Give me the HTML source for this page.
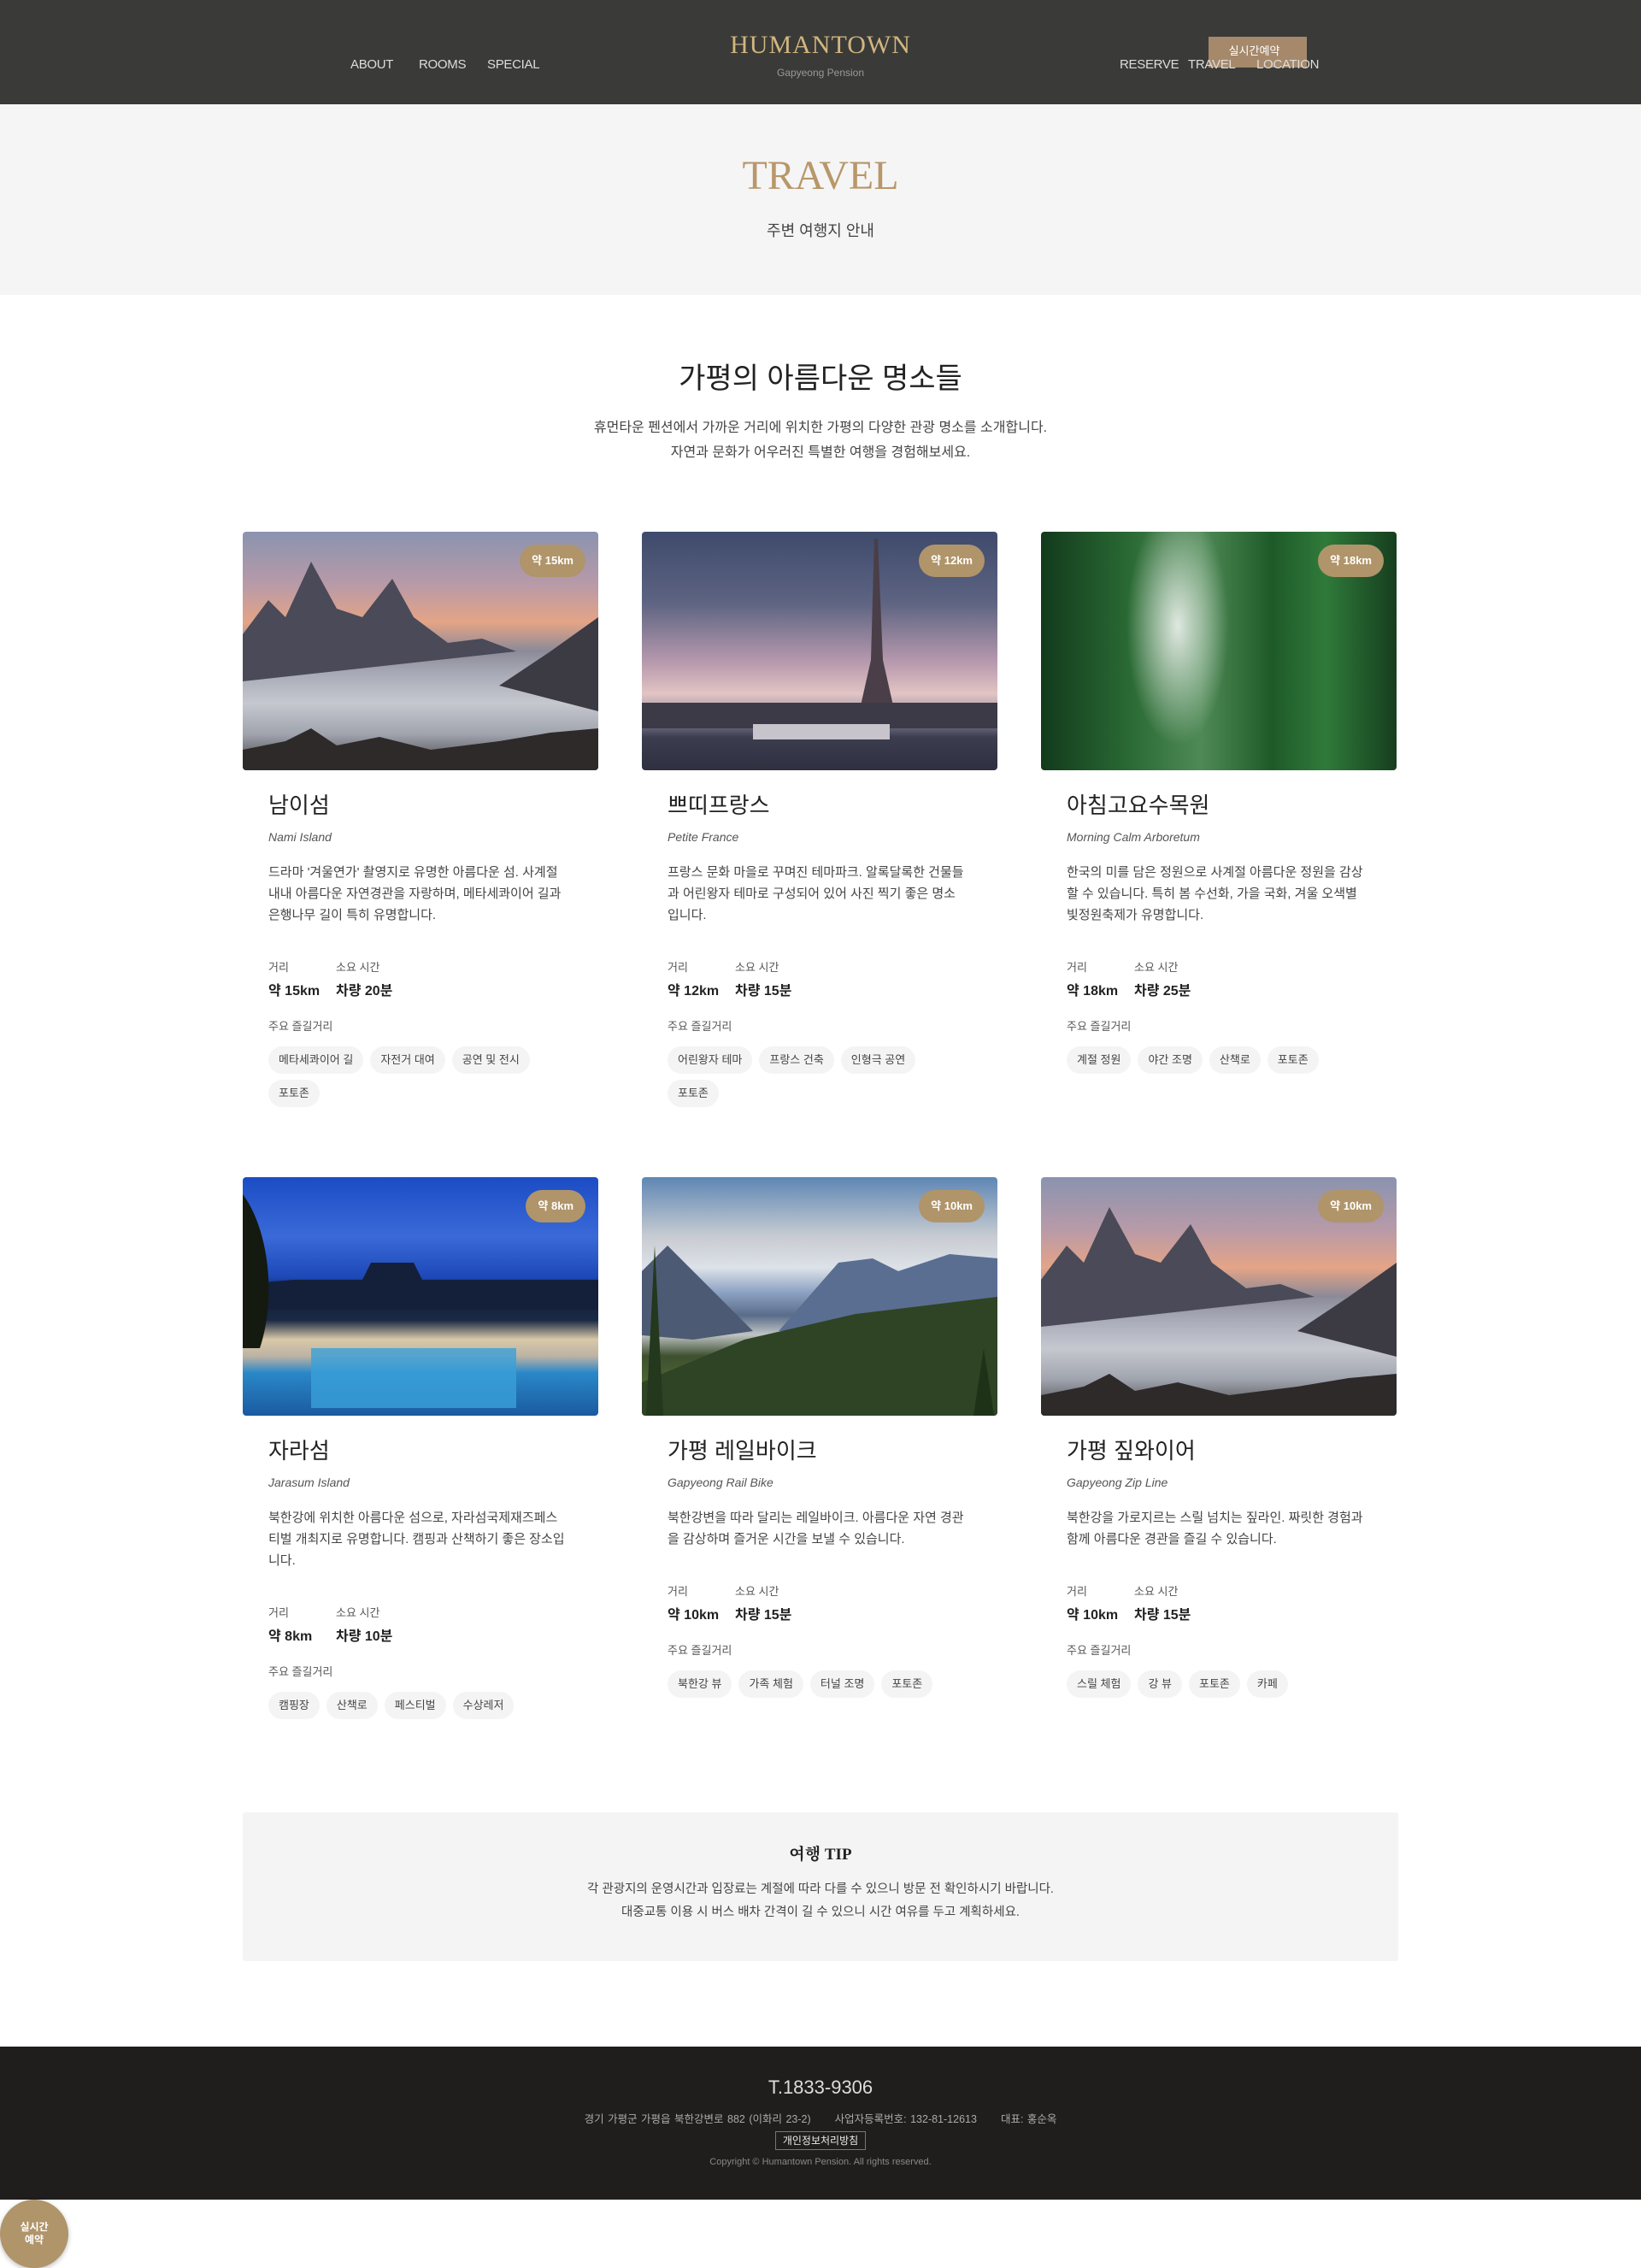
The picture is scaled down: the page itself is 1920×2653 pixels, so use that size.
<!DOCTYPE html>
<html lang="ko"><head><meta charset="utf-8"><title>Travel - Humantown</title>
<style>
*{margin:0;padding:0;box-sizing:border-box}
body{width:1920px;height:2653px;position:relative;background:#fff;font-family:"Liberation Sans","Noto Sans CJK KR",sans-serif;color:#333;overflow:hidden}
.hdr{position:absolute;left:0;top:0;width:1920px;height:122px;background:#3a3b38}
.nav{position:absolute;top:66px;font-size:15px;color:#ddd;white-space:nowrap;line-height:20px;letter-spacing:-0.3px}
.logo{position:absolute;left:0;width:1920px;text-align:center;top:36px;font-family:"Liberation Serif","Noto Serif CJK SC",serif;font-size:30px;color:#d2b57f;letter-spacing:1px;line-height:34px}
.logosub{position:absolute;left:0;width:1920px;text-align:center;top:78px;font-size:12px;color:#999}
.rbtn{position:absolute;left:1414px;top:43px;width:115px;height:36px;background:#a5896a;color:#fff;font-size:13px;text-align:center;line-height:34px;padding-right:8px}
.hero{position:absolute;top:122px;left:0;width:1920px;height:223px;background:#f5f5f5;text-align:center}
.hero h1{position:absolute;width:100%;font-family:"Liberation Serif",serif;font-weight:normal;font-size:48px;color:#b8976a;line-height:56px;top:56px}
.hero p{position:absolute;width:100%;top:136px;font-size:18px;color:#444;line-height:24px}
.sec{position:absolute;top:420px;left:0;width:1920px;text-align:center}
.sec h2{font-weight:normal;font-size:34px;color:#222;line-height:46px}
.sec p{margin-top:20px;font-size:16px;color:#444;line-height:29px}
.grid{position:absolute;left:284px;top:622px;width:1350px;display:grid;grid-template-columns:416px 416px 416px;column-gap:51px;row-gap:82px}
.card{min-height:673px}
.img{position:relative;width:416px;height:279px;border-radius:4px;overflow:hidden}
.badge{position:absolute;right:15px;top:15px;height:38px;padding:0 14px;border-radius:19px;background:#b0946a;color:#fff;font-size:13px;font-weight:bold;line-height:38px}
.body{padding:0 30px}
.body h3{margin-top:23px;font-weight:normal;font-size:26px;color:#222;line-height:36px}
.en{margin-top:9px;font-style:italic;font-size:14px;color:#555;line-height:20px}
.desc{margin-top:19px;font-size:15px;color:#444;line-height:25px;word-break:break-all;width:350px}
.stats{margin-top:40px;display:flex;gap:0}
.stats div{width:79px}
.lab{font-size:13px;color:#555;line-height:18px}
.val{margin-top:8px;font-size:16px;font-weight:bold;color:#222;line-height:22px;white-space:nowrap}
.act{margin-top:21px;font-size:13px;color:#555;line-height:18px}
.tags{margin-top:14px;display:flex;flex-wrap:wrap;gap:7px 8px}
.tags span{height:32px;line-height:32px;padding:0 12px;border-radius:16px;background:#f4f4f4;font-size:13px;color:#444}
.tip{position:absolute;left:284px;top:2120px;width:1352px;height:174px;background:#f4f4f4;border-radius:3px;text-align:center}
.tip h4{margin-top:37px;font-size:19px;color:#222;line-height:26px;font-family:"Liberation Serif","Noto Serif CJK SC",serif}
.tip p{margin-top:14px;font-size:14.5px;color:#444;line-height:27px}
.ftr{position:absolute;left:0;top:2394px;width:1920px;height:179px;background:#1f1e1d;text-align:center}
.ftr .ph{margin-top:35px;font-size:22px;color:#ddd;line-height:26px}
.ftr .ad{margin-top:15px;font-size:12.5px;color:#aaa;line-height:18px;word-spacing:1px}
.ftr .ad span{margin:0 14px}
.ftr .pb{display:inline-block;margin-top:5px;border:1px solid #777;padding:0 8px;height:22px;line-height:20px;font-size:12px;color:#eee}
.ftr .cp{margin-top:6px;font-size:11px;color:#888;line-height:16px}
.fab{position:absolute;left:0;top:2573px;width:80px;height:80px;border-radius:50%;background:#b0946a;color:#fff;font-size:12px;font-weight:bold;text-align:center;line-height:15px;padding-top:25px;box-shadow:0 2px 6px rgba(0,0,0,.25)}
</style></head><body>
<div class="hdr">
<div class="nav" style="left:410px">ABOUT</div>
<div class="nav" style="left:490px">ROOMS</div>
<div class="nav" style="left:570px">SPECIAL</div>
<div class="logo">HUMANTOWN</div>
<div class="logosub">Gapyeong Pension</div>
<div class="rbtn">실시간예약</div>
<div class="nav" style="left:1310px">RESERVE</div>
<div class="nav" style="left:1390px">TRAVEL</div>
<div class="nav" style="left:1470px">LOCATION</div>
</div>
<div class="hero"><h1>TRAVEL</h1><p>주변 여행지 안내</p></div>
<div class="sec"><h2>가평의 아름다운 명소들</h2><p>휴먼타운 펜션에서 가까운 거리에 위치한 가평의 다양한 관광 명소를 소개합니다.<br>자연과 문화가 어우러진 특별한 여행을 경험해보세요.</p></div>

<div class="grid">
<div class="card"><div class="img" style="background:linear-gradient(180deg,#8a93b0 0%,#b89aa8 22%,#e4a486 38%,#8c8a98 50%,#a9acb8 60%,#c6c8d0 72%,#9fa3ad 85%,#3e3a3a 100%)">
<svg width="416" height="279" style="position:absolute;left:0;top:0"><polygon points="0,120 30,80 50,100 80,35 110,90 140,100 175,55 200,100 240,130 280,125 320,140 0,175" fill="#4a4a58"/><polygon points="416,100 416,210 300,180 360,140" fill="#3c3a42"/><polygon points="0,279 0,255 50,245 80,230 110,250 160,240 220,255 300,245 360,235 416,230 416,279" fill="#2e2a2a"/></svg>
<div class="badge">약 15km</div></div>
<div class="body"><h3>남이섬</h3><div class="en">Nami Island</div><div class="desc">드라마 '겨울연가' 촬영지로 유명한 아름다운 섬. 사계절 내내 아름다운 자연경관을 자랑하며, 메타세콰이어 길과 은행나무 길이 특히 유명합니다.</div>
<div class="stats"><div><div class="lab">거리</div><div class="val">약 15km</div></div><div><div class="lab">소요 시간</div><div class="val">차량 20분</div></div></div>
<div class="act">주요 즐길거리</div><div class="tags"><span>메타세콰이어 길</span><span>자전거 대여</span><span>공연 및 전시</span><span>포토존</span></div></div></div>
<div class="card"><div class="img" style="background:linear-gradient(180deg,#3e4a6c 0%,#5e6482 30%,#b89aae 55%,#e2c4c4 68%,#8e8aa0 78%,#3c3e50 86%,#2e3040 100%)">
<svg width="416" height="279" style="position:absolute;left:0;top:0"><polygon points="272,8 276,8 282,150 300,230 250,230 268,150" fill="#4a3e48"/><rect x="0" y="200" width="416" height="30" fill="#3c3a46"/><rect x="130" y="225" width="160" height="18" fill="#c8c4cc"/></svg>
<div class="badge">약 12km</div></div>
<div class="body"><h3>쁘띠프랑스</h3><div class="en">Petite France</div><div class="desc">프랑스 문화 마을로 꾸며진 테마파크. 알록달록한 건물들과 어린왕자 테마로 구성되어 있어 사진 찍기 좋은 명소입니다.</div>
<div class="stats"><div><div class="lab">거리</div><div class="val">약 12km</div></div><div><div class="lab">소요 시간</div><div class="val">차량 15분</div></div></div>
<div class="act">주요 즐길거리</div><div class="tags"><span>어린왕자 테마</span><span>프랑스 건축</span><span>인형극 공연</span><span>포토존</span></div></div></div>
<div class="card"><div class="img" style="background:radial-gradient(ellipse 60px 140px at 160px 110px,#dfe8e0 0%,rgba(200,220,200,0) 100%),linear-gradient(90deg,#123a1c 0%,#2a6a34 25%,#4f8a56 45%,#1e5a28 65%,#2f7a3a 80%,#163e1e 100%)">
<div class="badge">약 18km</div></div>
<div class="body"><h3>아침고요수목원</h3><div class="en">Morning Calm Arboretum</div><div class="desc">한국의 미를 담은 정원으로 사계절 아름다운 정원을 감상할 수 있습니다. 특히 봄 수선화, 가을 국화, 겨울 오색별빛정원축제가 유명합니다.</div>
<div class="stats"><div><div class="lab">거리</div><div class="val">약 18km</div></div><div><div class="lab">소요 시간</div><div class="val">차량 25분</div></div></div>
<div class="act">주요 즐길거리</div><div class="tags"><span>계절 정원</span><span>야간 조명</span><span>산책로</span><span>포토존</span></div></div></div>
<div class="card"><div class="img" style="background:linear-gradient(180deg,#1c4cc4 0%,#3a6ad8 25%,#1d48b8 42%,#0e1e3c 48%,#1a2a44 60%,#d8c8a8 68%,#bdb3a4 75%,#2a88c8 82%,#1a5aa0 100%)">
<svg width="416" height="279" style="position:absolute;left:0;top:0"><polygon points="60,120 140,120 150,100 200,100 210,120 416,120 416,155 0,155 0,125" fill="#14203a"/><rect x="80" y="200" width="240" height="70" fill="#3aa0d8" opacity=".8"/><path d="M0,20 C30,60 40,140 20,200 L0,200Z" fill="#141a10"/></svg>
<div class="badge">약 8km</div></div>
<div class="body"><h3>자라섬</h3><div class="en">Jarasum Island</div><div class="desc">북한강에 위치한 아름다운 섬으로, 자라섬국제재즈페스티벌 개최지로 유명합니다. 캠핑과 산책하기 좋은 장소입니다.</div>
<div class="stats"><div><div class="lab">거리</div><div class="val">약 8km</div></div><div><div class="lab">소요 시간</div><div class="val">차량 10분</div></div></div>
<div class="act">주요 즐길거리</div><div class="tags"><span>캠핑장</span><span>산책로</span><span>페스티벌</span><span>수상레저</span></div></div></div>
<div class="card"><div class="img" style="background:linear-gradient(180deg,#5e86b4 0%,#c8ccd2 25%,#dde2e8 38%,#8ea4c4 48%,#5a6c8a 58%,#c0c4c4 66%,#3e5030 75%,#4e6a34 88%,#3a5224 100%)">
<svg width="416" height="279" style="position:absolute;left:0;top:0"><polygon points="0,110 30,80 80,130 130,180 60,190 0,185" fill="#4c5a74"/><polygon points="160,180 230,100 270,95 300,110 360,90 416,95 416,170" fill="#5a6e92"/><polygon points="0,279 0,240 120,190 250,160 416,140 416,279" fill="#2e4424"/><path d="M15,80 L25,279 L5,279 Z" fill="#23381c"/><path d="M400,200 L412,279 L388,279Z" fill="#1e3218"/></svg>
<div class="badge">약 10km</div></div>
<div class="body"><h3>가평 레일바이크</h3><div class="en">Gapyeong Rail Bike</div><div class="desc">북한강변을 따라 달리는 레일바이크. 아름다운 자연 경관을 감상하며 즐거운 시간을 보낼 수 있습니다.</div>
<div class="stats"><div><div class="lab">거리</div><div class="val">약 10km</div></div><div><div class="lab">소요 시간</div><div class="val">차량 15분</div></div></div>
<div class="act">주요 즐길거리</div><div class="tags"><span>북한강 뷰</span><span>가족 체험</span><span>터널 조명</span><span>포토존</span></div></div></div>
<div class="card"><div class="img" style="background:linear-gradient(180deg,#8a93b0 0%,#b89aa8 22%,#e4a486 38%,#8c8a98 50%,#a9acb8 60%,#c6c8d0 72%,#9fa3ad 85%,#3e3a3a 100%)">
<svg width="416" height="279" style="position:absolute;left:0;top:0"><polygon points="0,120 30,80 50,100 80,35 110,90 140,100 175,55 200,100 240,130 280,125 320,140 0,175" fill="#4a4a58"/><polygon points="416,100 416,210 300,180 360,140" fill="#3c3a42"/><polygon points="0,279 0,255 50,245 80,230 110,250 160,240 220,255 300,245 360,235 416,230 416,279" fill="#2e2a2a"/></svg>
<div class="badge">약 10km</div></div>
<div class="body"><h3>가평 짚와이어</h3><div class="en">Gapyeong Zip Line</div><div class="desc">북한강을 가로지르는 스릴 넘치는 짚라인. 짜릿한 경험과 함께 아름다운 경관을 즐길 수 있습니다.</div>
<div class="stats"><div><div class="lab">거리</div><div class="val">약 10km</div></div><div><div class="lab">소요 시간</div><div class="val">차량 15분</div></div></div>
<div class="act">주요 즐길거리</div><div class="tags"><span>스릴 체험</span><span>강 뷰</span><span>포토존</span><span>카페</span></div></div></div>
</div>

<div class="tip"><h4>여행 TIP</h4><p>각 관광지의 운영시간과 입장료는 계절에 따라 다를 수 있으니 방문 전 확인하시기 바랍니다.<br>대중교통 이용 시 버스 배차 간격이 길 수 있으니 시간 여유를 두고 계획하세요.</p></div>

<div class="ftr"><div class="ph">T.1833-9306</div>
<div class="ad">경기 가평군 가평읍 북한강변로 882 (이화리 23-2)<span></span>사업자등록번호: 132-81-12613<span></span>대표: 홍순옥</div>
<div class="pb">개인정보처리방침</div>
<div class="cp">Copyright © Humantown Pension. All rights reserved.</div></div>
<div class="fab">실시간<br>예약</div>
</body></html>
